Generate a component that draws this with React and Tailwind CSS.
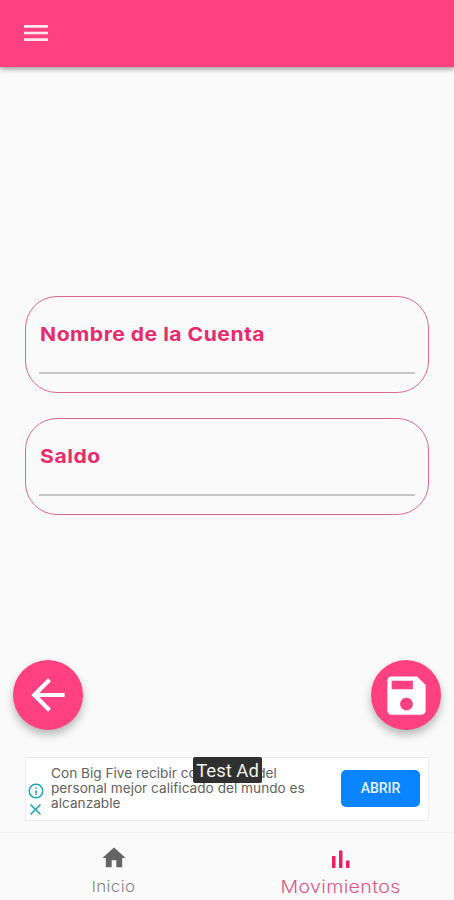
import React, { useState } from "react";
import {
  MdArrowBack,
  MdClose,
  MdHome,
  MdInfoOutline,
  MdMenu,
  MdSave,
} from "react-icons/md";

function Field({ label, name }) {
  const [value, setValue] = useState("");

  return (
    <div className="h-[97px] rounded-[32px] border border-[#dc6a8f] px-[13px] pt-6">
      <label
        htmlFor={name}
        className="block h-7 origin-left scale-x-[1.11] pl-px whitespace-nowrap text-[19px] leading-7 font-bold tracking-[0.45px] text-[#e72b6c]"
      >
        {label}
      </label>
      <input
        id={name}
        value={value}
        onChange={(e) => setValue(e.target.value)}
        className="block h-[25px] w-full border-b-2 border-[#c6c6c6] bg-transparent outline-none"
      />
    </div>
  );
}

function RoundButton({ label, children }) {
  return (
    <button
      aria-label={label}
      className="flex size-[70px] items-center justify-center rounded-full bg-[#ff4081] text-white shadow-[0_5px_8px_rgba(0,0,0,0.27)]"
    >
      {children}
    </button>
  );
}

function AdBanner() {
  return (
    <div className="relative mx-[25px] mt-[26px] flex h-[64px] border border-[#ececec] bg-white">
      <div className="flex w-[25px] shrink-0 flex-col items-center pt-[24px] pr-[6px] text-[#1ba5b5]">
        <MdInfoOutline size={18} />
        <MdClose size={19} />
      </div>
      <p className="w-[215px] origin-left scale-x-[1.05] pt-[8px] text-[13px] leading-[15px] whitespace-nowrap text-[#626262]">
        <span className="flex justify-between">
          <span>Con Big Five recibir co</span>
          <span>del</span>
        </span>
        <span className="block">personal mejor calificado del mundo es</span>
        <span className="block">alcanzable</span>
      </p>
      <button className="absolute top-[12px] right-[8px] h-[37px] w-[79px] rounded-[5px] bg-[#0a84ff] font-[Roboto,sans-serif] text-[14px] font-medium text-[#e8f3ff]">
        ABRIR
      </button>
      <span className="absolute -top-px left-[167px] flex h-[26px] w-[69px] items-center justify-center rounded-[2px] bg-[#303030] pt-[4px] font-[Roboto,sans-serif] text-[18.5px] whitespace-nowrap text-[#f2f2f2]">
        Test Ad
      </span>
    </div>
  );
}

function App() {
  return (
    <div className="flex h-[900px] w-[454px] flex-col overflow-hidden bg-[#fafafa] font-[Inter,sans-serif]">
      <header className="flex h-[67px] shrink-0 items-center bg-[#ff4081] pb-[2px] pl-5 text-[#ffe6ef] shadow-[0_2px_5px_rgba(0,0,0,0.4)]">
        <button aria-label="Menu">
          <MdMenu size={32} />
        </button>
      </header>

      <main className="flex h-[593px] shrink-0 flex-col gap-[25px] px-[25px] pt-[229px]">
        <Field label="Nombre de la Cuenta" name="nombre" />
        <Field label="Saldo" name="saldo" />
      </main>

      <div className="flex h-[71px] shrink-0 justify-between px-[13px]">
        <RoundButton label="Volver">
          <MdArrowBack size={50} />
        </RoundButton>
        <RoundButton label="Guardar">
          <MdSave size={51} />
        </RoundButton>
      </div>

      <AdBanner />

      <nav className="mt-[11px] grid h-[68px] shrink-0 grid-cols-2 border-t border-[#f2f2f2]">
        <a className="flex flex-col items-center pt-[11px] text-[#646464]">
          <MdHome size={28} />
          <span className="mt-[5px] scale-x-[1.13] text-[15px] leading-5 font-light tracking-[0.3px] text-[#858585]">
            Inicio
          </span>
        </a>
        <a className="flex flex-col items-center pt-[12px] text-[#e91e63]">
          <svg width="28" height="28" viewBox="0 0 28 28" fill="currentColor">
            <rect x="5" y="11" width="3.5" height="12" rx="0.7" />
            <rect x="12" y="5.5" width="3.5" height="17.5" rx="0.7" />
            <rect x="19" y="15.5" width="3.5" height="7.5" rx="0.7" />
          </svg>
          <span className="mt-[4px] scale-x-[1.12] text-[17.5px] leading-5 font-light tracking-[0.3px] text-[#e05586]">
            Movimientos
          </span>
        </a>
      </nav>
    </div>
  );
}

export default App;
